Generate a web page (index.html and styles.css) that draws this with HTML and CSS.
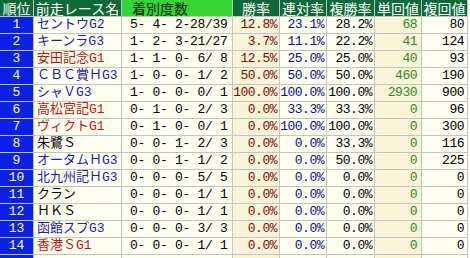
FILE: index.html
```html
<!DOCTYPE html>
<html lang="ja">
<head>
<meta charset="utf-8">
<title>前走レース別成績</title>
<link rel="stylesheet" href="styles.css">
</head>
<body>
<div class="grid">
  <div class="h dark">順位</div>
  <div class="h dark">前走レース名</div>
  <div class="h bright">着別度数</div>
  <div class="h dark">勝率</div>
  <div class="h dark">連対率</div>
  <div class="h dark">複勝率</div>
  <div class="h dark">単回値</div>
  <div class="h dark">複回値</div>

  <div class="rank">1</div><div class="race g">セントウG2</div><div class="rec">5- 4- 2-28/39</div><div class="num win">12.8%</div><div class="num ren">23.1%</div><div class="num fuku">28.2%</div><div class="num tan">68</div><div class="num fk">80</div>
  <div class="rank">2</div><div class="race g">キーンラG3</div><div class="rec">1- 2- 3-21/27</div><div class="num win">3.7%</div><div class="num ren">11.1%</div><div class="num fuku">22.2%</div><div class="num tan">41</div><div class="num fk">124</div>
  <div class="rank">3</div><div class="race g1">安田記念G1</div><div class="rec">1- 1- 0- 6/ 8</div><div class="num win">12.5%</div><div class="num ren">25.0%</div><div class="num fuku">25.0%</div><div class="num tan">40</div><div class="num fk">93</div>
  <div class="rank">4</div><div class="race g">ＣＢＣ賞ＨG3</div><div class="rec">1- 0- 0- 1/ 2</div><div class="num win">50.0%</div><div class="num ren">50.0%</div><div class="num fuku">50.0%</div><div class="num tan">460</div><div class="num fk">190</div>
  <div class="rank">5</div><div class="race g">シャＶG3</div><div class="rec">1- 0- 0- 0/ 1</div><div class="num win">100.0%</div><div class="num ren">100.0%</div><div class="num fuku">100.0%</div><div class="num tan">2930</div><div class="num fk">900</div>
  <div class="rank">6</div><div class="race g1">高松宮記G1</div><div class="rec">0- 1- 0- 2/ 3</div><div class="num win">0.0%</div><div class="num ren">33.3%</div><div class="num fuku">33.3%</div><div class="num tan">0</div><div class="num fk">96</div>
  <div class="rank">7</div><div class="race g1">ヴィクトG1</div><div class="rec">0- 1- 0- 0/ 1</div><div class="num win">0.0%</div><div class="num ren">100.0%</div><div class="num fuku">100.0%</div><div class="num tan">0</div><div class="num fk">300</div>
  <div class="rank">8</div><div class="race">朱鷺Ｓ</div><div class="rec">0- 0- 1- 2/ 3</div><div class="num win">0.0%</div><div class="num ren">0.0%</div><div class="num fuku">33.3%</div><div class="num tan">0</div><div class="num fk">116</div>
  <div class="rank">9</div><div class="race g">オータムＨG3</div><div class="rec">0- 0- 1- 1/ 2</div><div class="num win">0.0%</div><div class="num ren">0.0%</div><div class="num fuku">50.0%</div><div class="num tan">0</div><div class="num fk">225</div>
  <div class="rank">10</div><div class="race g">北九州記ＨG3</div><div class="rec">0- 0- 0- 5/ 5</div><div class="num win">0.0%</div><div class="num ren">0.0%</div><div class="num fuku">0.0%</div><div class="num tan">0</div><div class="num fk">0</div>
  <div class="rank">11</div><div class="race">クラン</div><div class="rec">0- 0- 0- 1/ 1</div><div class="num win">0.0%</div><div class="num ren">0.0%</div><div class="num fuku">0.0%</div><div class="num tan">0</div><div class="num fk">0</div>
  <div class="rank">12</div><div class="race">ＨＫＳ</div><div class="rec">0- 0- 0- 1/ 1</div><div class="num win">0.0%</div><div class="num ren">0.0%</div><div class="num fuku">0.0%</div><div class="num tan">0</div><div class="num fk">0</div>
  <div class="rank">13</div><div class="race g">函館スプG3</div><div class="rec">0- 0- 0- 3/ 3</div><div class="num win">0.0%</div><div class="num ren">0.0%</div><div class="num fuku">0.0%</div><div class="num tan">0</div><div class="num fk">0</div>
  <div class="rank">14</div><div class="race g1">香港ＳG1</div><div class="rec">0- 0- 0- 1/ 1</div><div class="num win">0.0%</div><div class="num ren">0.0%</div><div class="num fuku">0.0%</div><div class="num tan">0</div><div class="num fk">0</div>
  <div class="rank"></div><div class="race"></div><div class="rec"></div><div class="num win"></div><div class="num ren"></div><div class="num fuku"></div><div class="num tan"></div><div class="num fk"></div>
</div>
</body>
</html>
```

FILE: styles.css
```css
html, body {
  margin: 0;
  padding: 0;
  background: #ffffff;
  overflow: hidden;
}

.grid {
  display: grid;
  grid-template-columns: 33px 87px 110px 46px 46px 47px 46px 45px;
  grid-template-rows: repeat(15, 16px) 3px;
  gap: 1px;
  width: max-content;
  padding-right: 1px;
  background: #c4c4c4;
}

.grid > div {
  line-height: 16px;
  white-space: pre;
}

.h {
  font-family: "Noto Sans CJK JP", sans-serif;
  font-size: 14px;
  text-align: center;
  color: #ffffff;
  line-height: 16px;
}

.dark {
  background: #0c6a36;
}

.bright {
  background: #33d633;
  color: #002200;
  text-align: left !important;
  padding-left: 10px;
}

.rank {
  background: #0a22e6;
  color: #ffffff;
  text-align: center;
  font-family: "Liberation Mono", "Noto Sans CJK JP", monospace;
  font-size: 13px;
}

.race {
  background: #fffff0;
  color: #000000;
  font-family: "Liberation Mono", "Noto Sans CJK JP", monospace;
  font-size: 13px;
  padding-left: 3px;
}

.race.g {
  color: #1a1ab4;
}

.race.g1 {
  color: #cc0f0f;
}

.rec {
  background: #fffff0;
  color: #000000;
  font-family: "Liberation Mono", monospace;
  font-size: 13px;
  letter-spacing: -0.3px;
  padding-left: 8px;
}

.num {
  font-family: "Liberation Mono", monospace;
  font-size: 13px;
  letter-spacing: -0.5px;
  text-align: right;
  padding-right: 2px;
  background: #fffff0;
}

.win {
  background: #f8f5d6;
  color: #7a0a0a;
}

.ren {
  color: #0c0c96;
}

.fuku {
  color: #000000;
}

.tan {
  background: #f8f5d6;
  color: #2b8a2b;
  padding-right: 4px;
}

.fk {
  color: #000000;
  padding-right: 3px;
}
```
